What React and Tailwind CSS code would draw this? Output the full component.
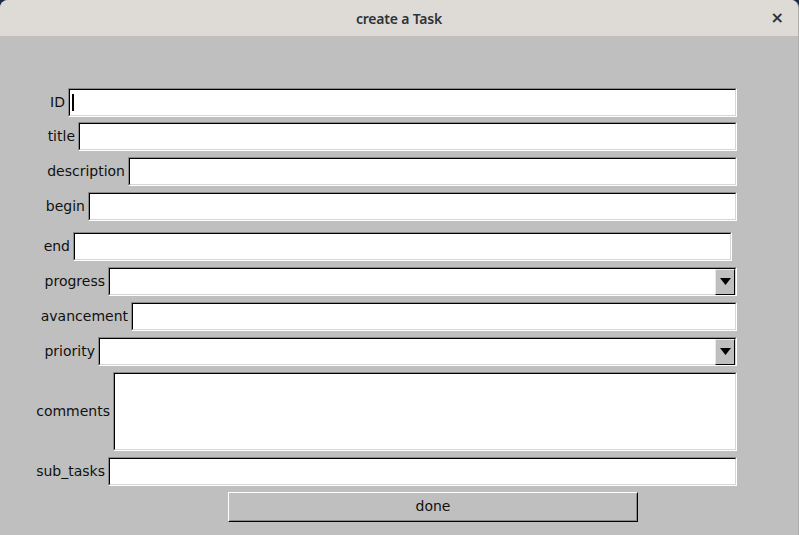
const ROWS = [
  { label: 'ID', box: 'w-[68px]', field: 'w-[669px]', mt: 'mt-[51px]', h: 'h-[29px]', cursor: true },
  { label: 'title', box: 'w-[78px]', field: 'w-[659px]', mt: 'mt-[5px]', h: 'h-[29px]' },
  { label: 'description', box: 'w-[128px]', field: 'w-[609px]', mt: 'mt-[6px]', h: 'h-[29px]' },
  { label: 'begin', box: 'w-[88px]', field: 'w-[649px]', mt: 'mt-[6px]', h: 'h-[29px]' },
  { label: 'end', box: 'w-[73px]', field: 'w-[659px]', mt: 'mt-[11px]', h: 'h-[29px]' },
  { label: 'progress', box: 'w-[108px]', field: 'w-[629px]', mt: 'mt-[6px]', h: 'h-[29px]', combo: true },
  { label: 'avancement', box: 'w-[131px]', field: 'w-[606px]', mt: 'mt-[6px]', h: 'h-[29px]' },
  { label: 'priority', box: 'w-[98px]', field: 'w-[639px]', mt: 'mt-[6px]', h: 'h-[29px]', combo: true },
  { label: 'comments', box: 'w-[113px]', field: 'w-[624px]', mt: 'mt-[6px]', h: 'h-[79px]' },
  { label: 'sub_tasks', box: 'w-[108px]', field: 'w-[629px]', mt: 'mt-[6px]', h: 'h-[29px]' },
];

function Field({ row }) {
  return (
    <div className={`${row.field} ${row.h} border border-t-[#8a8a8a] border-l-[#8a8a8a] border-b-white border-r-white`}>
      <div className="w-full h-full bg-white border border-t-black border-l-black border-b-[#d6d6d6] border-r-[#d6d6d6] flex items-center justify-end">
        {row.cursor && <div className="mr-auto ml-[2px] w-[2px] h-[17px] bg-black" />}
        {row.combo && (
          <div className="w-[20px] h-[26px] bg-[#bfbfbf] border border-t-[#e8e8e8] border-l-[#e8e8e8] border-b-black border-r-black flex items-center justify-center">
            <svg width="11" height="7" viewBox="0 0 11 7">
              <path d="M0 0H11L5.5 7Z" fill="black" />
            </svg>
          </div>
        )}
      </div>
    </div>
  );
}

export default function App() {
  return (
    <div className="w-[799px] h-[535px] bg-[#1d2b45] font-['DejaVu_Sans',sans-serif] text-[14px] text-[#111]">
      <div className="w-full h-full rounded-t-[8px] overflow-hidden flex flex-col bg-[#bfbfbf] border-r border-[#b0aeab]">
        <div className="h-[37px] shrink-0 bg-[#dedbd7] border-b border-[#c2bfbb] flex items-center relative">
          <span className="mx-auto font-['Noto_Sans',sans-serif] font-semibold text-[14px] text-[#2e3436] tracking-[-0.2px]">create a Task</span>
          <span className="absolute right-[14px] top-[6px] font-['DejaVu_Sans',sans-serif] font-bold text-[16px] leading-[24px] text-[#2e3436]">×</span>
        </div>
        <div className="flex flex-col">
          {ROWS.map((row) => (
            <div key={row.label} className={`flex items-center ${row.mt}`}>
              <div className={`${row.box} shrink-0 text-right pr-[3px] pb-[2px] leading-none`}>{row.label}</div>
              <Field row={row} />
            </div>
          ))}
          <div className="mt-[6px] ml-[228px] w-[410px] h-[30px] border border-t-white border-l-white border-b-black border-r-black">
            <div className="w-full h-full border border-t-[#bfbfbf] border-l-[#bfbfbf] border-b-[#8a8a8a] border-r-[#8a8a8a] flex items-center justify-center pb-[2px]">
              done
            </div>
          </div>
        </div>
      </div>
    </div>
  );
}
